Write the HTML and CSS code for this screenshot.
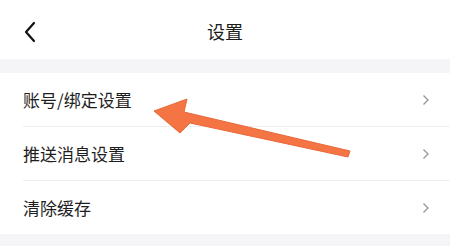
FILE: index.html
```html
<!DOCTYPE html>
<html lang="zh-CN">
<head>
    <meta charset="UTF-8">
    <meta name="viewport" content="width=device-width, initial-scale=1.0">
    <title>设置</title>
    <link rel="stylesheet" href="styles.css">
</head>
<body>
    <div class="title-bar">
        <svg class="back-icon" width="14" height="22" viewBox="0 0 14 22">
            <polyline points="11,2 3,11 11,20" fill="none" stroke="#111" stroke-width="2.2" stroke-linecap="round" stroke-linejoin="round"/>
        </svg>
        <span class="title">设置</span>
    </div>
    <div class="gap"></div>
    <div class="list">
        <div class="item">
            <div class="item-inner">
                <span class="label">账号/绑定设置</span>
                <svg class="chevron" width="8" height="12" viewBox="0 0 8 12"><polyline points="1.5,1.5 6,6 1.5,10.5" fill="none" stroke="#999" stroke-width="1.4"/></svg>
            </div>
        </div>
        <div class="item">
            <div class="item-inner">
                <span class="label">推送消息设置</span>
                <svg class="chevron" width="8" height="12" viewBox="0 0 8 12"><polyline points="1.5,1.5 6,6 1.5,10.5" fill="none" stroke="#999" stroke-width="1.4"/></svg>
            </div>
        </div>
        <div class="item">
            <div class="item-inner last">
                <span class="label">清除缓存</span>
                <svg class="chevron" width="8" height="12" viewBox="0 0 8 12"><polyline points="1.5,1.5 6,6 1.5,10.5" fill="none" stroke="#999" stroke-width="1.4"/></svg>
            </div>
        </div>
    </div>
    <div class="gap bottom"></div>

    <!-- annotation arrow drawn over the list -->
    <svg class="pointer" width="450" height="246" viewBox="0 0 450 246">
        <polygon points="154,111 187,99 184,112 350,151 348,157 190,123 180,133" fill="#f47444" stroke="#e8693b" stroke-width="1" stroke-linejoin="round"/>
    </svg>
</body>
</html>
```

FILE: styles.css
```css
* {
    margin: 0;
    padding: 0;
    box-sizing: border-box;
}
body {
    font-family: "Noto Sans CJK SC", "Noto Sans", sans-serif;
    background-color: #fff;
    width: 450px;
    height: 246px;
    overflow: hidden;
    position: relative;
}
.title-bar {
    height: 59px;
    display: flex;
    align-items: center;
    justify-content: center;
    position: relative;
    background-color: #fff;
}
.back-icon {
    position: absolute;
    left: 23px;
    top: 21px;
}
.title {
    font-size: 18px;
    color: #1c1c1c;
    margin-top: 3px;
}
.gap {
    height: 14px;
    background-color: #f5f5f7;
}
.gap.bottom {
    height: 13px;
}
.list {
    background-color: #fff;
}
.item {
    padding-left: 23px;
}
.item-inner {
    height: 54px;
    display: flex;
    align-items: center;
    justify-content: space-between;
    padding-right: 20px;
    border-bottom: 1px solid #efefef;
}
.item-inner.last {
    height: 53px;
    border-bottom: none;
}
.label {
    font-size: 17px;
    color: #1e1e1e;
}
.pointer {
    position: absolute;
    left: 0;
    top: 0;
}
```
